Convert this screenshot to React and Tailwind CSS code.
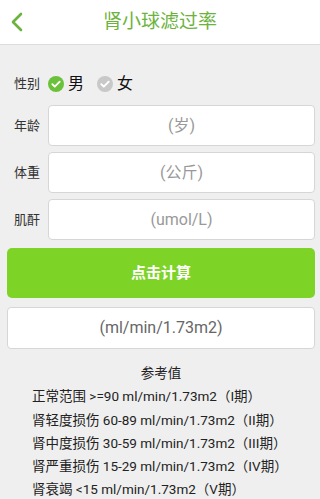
import React from "react";

const font = { fontFamily: 'Roboto, "Noto Sans CJK SC", sans-serif' };

const CheckDot = ({ on }) => (
  <svg width="16" height="16" viewBox="0 0 16 16">
    <circle cx="8" cy="8" r="8" fill={on ? "#6cc13a" : "#c8c8c8"} />
    <path d="M4.3 8.2l2.5 2.5 4.9-5" fill="none" stroke="#fff" strokeWidth="1.9" strokeLinecap="round" strokeLinejoin="round" />
  </svg>
);

const Field = ({ label, hint }) => (
  <div className="flex items-center h-[41px]">
    <span className="w-[41px] pl-[7px] text-[13px] text-[#333]">{label}</span>
    <div className="flex-1 h-full bg-white border border-[#d6d6d6] rounded-[4px] flex items-center justify-center text-[16px] text-[#999]">
      {hint}
    </div>
  </div>
);

const refs = [
  "正常范围 >=90 ml/min/1.73m2（I期）",
  "肾轻度损伤 60-89 ml/min/1.73m2（II期）",
  "肾中度损伤 30-59 ml/min/1.73m2（III期）",
  "肾严重损伤 15-29 ml/min/1.73m2（IV期）",
  "肾衰竭 <15 ml/min/1.73m2（V期）",
];

export default function App() {
  return (
    <div className="w-[320px] h-[499px] overflow-hidden bg-[#efefef]" style={font}>
      <div className="h-[45px] bg-white border-b border-[#dcdcdc] flex items-center relative">
        <svg className="absolute left-[10px] top-[12px]" width="14" height="20" viewBox="0 0 14 20">
          <path d="M11 2L3 10l8 8" fill="none" stroke="#6cb33e" strokeWidth="2.6" strokeLinecap="round" strokeLinejoin="round" />
        </svg>
        <div className="w-full text-center text-[19px] text-[#6cb33e]">肾小球滤过率</div>
      </div>

      <div className="px-[7px] pr-[5px]">
        <div className="mt-[28px] h-[22px] flex items-center">
          <span className="pl-[7px] w-[41px] text-[13px] text-[#333]">性别</span>
          <CheckDot on />
          <span className="ml-[4px] text-[16px] text-[#111]">男</span>
          <span className="ml-[13px] flex"><CheckDot /></span>
          <span className="ml-[4px] text-[16px] text-[#111]">女</span>
        </div>

        <div className="mt-[10px] flex flex-col gap-[6px]">
          <Field label="年龄" hint="(岁)" />
          <Field label="体重" hint="(公斤)" />
          <Field label="肌酐" hint="(umol/L)" />
        </div>

        <div className="mt-[8px] h-[50px] rounded-[5px] bg-[#7ed327] flex items-center justify-center text-white text-[15px] font-bold">
          点击计算
        </div>

        <div className="mt-[9px] h-[42px] bg-white border border-[#d6d6d6] rounded-[4px] flex items-center justify-center text-[16px] text-[#666]">
          (ml/min/1.73m2)
        </div>

        <div className="mt-[13px] text-[13.5px] leading-[23.3px] text-[#222]">
          <div className="text-center">参考值</div>
          {refs.map((r) => (
            <div key={r} className="pl-[25px] whitespace-nowrap">{r}</div>
          ))}
        </div>
      </div>
    </div>
  );
}
